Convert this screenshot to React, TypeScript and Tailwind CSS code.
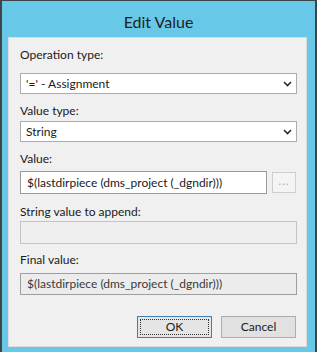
import React from "react";

const font = { fontFamily: 'Lato, "Liberation Sans", Arial, sans-serif' };

function Chevron() {
  return (
    <svg width="9" height="6" viewBox="0 0 9 6" className="shrink-0">
      <path d="M1 1 L4.5 4.5 L8 1" fill="none" stroke="#2b2b2b" strokeWidth="1.6" />
    </svg>
  );
}

function Combo({ value, className = "" }: { value: string; className?: string }) {
  return (
    <div
      className={`mr-[-1px] flex h-[21px] items-center justify-between border border-[#acacac] bg-white pl-[5px] pr-[4px] text-[12px] text-[#1a1a1a] ${className}`}
    >
      <span>{value}</span>
      <Chevron />
    </div>
  );
}

function Label({ text, className = "" }: { text: string; className?: string }) {
  return <div className={`h-[15px] text-[12px] leading-[15px] text-[#1a1a1a] ${className}`}>{text}</div>;
}

export default function App() {
  return (
    <div
      style={font}
      className="flex h-[352px] w-[317px] flex-col border-t border-l-2 border-r-2 border-[#3f4649] bg-[#67c8e8]"
    >
      <div className="flex h-[36px] items-center justify-center pt-[5px] text-[16px] text-[#1f1f1f]">
        Edit Value
      </div>
      <div className="ml-[6px] mr-[8px] mb-[5px] flex flex-1 flex-col border border-[#dcdcdc] bg-[#f0f0f0] pl-[11px] pr-[10px] pt-[9px]">
        <Label text="Operation type:" />
        <Combo value="'=' - Assignment" className="mt-[11px]" />
        <Label text="Value type:" className="mt-[9px]" />
        <Combo value="String" className="mt-[3px]" />
        <Label text="Value:" className="mt-[9px]" />
        <div className="mt-[5px] flex items-center gap-[5px]">
          <div className="flex h-[23px] w-[247px] items-center border border-[#9a9a9a] bg-white pl-[6px] text-[12px] text-[#1a1a1a]">
            $(lastdirpiece (dms_project (_dgndir)))
          </div>
          <div className="flex h-[21px] w-[24px] items-center justify-center border border-[#cfcfcf] bg-[#f4f4f4] pb-[2px] text-[11px] tracking-[1px] text-[#a8a8a8]">
            ...
          </div>
        </div>
        <Label text="String value to append:" className="mt-[10px]" />
        <div className="mt-[2px] mr-[-1px] h-[23px] border border-[#c4c4c4] bg-[#efefef]" />
        <Label text="Final value:" className="mt-[8px]" />
        <div className="mt-[6px] mr-[-1px] flex h-[22px] items-center border border-[#9e9e9e] bg-[#ececec] pl-[6px] text-[12px] text-[#3a3a3a]">
          $(lastdirpiece (dms_project (_dgndir)))
        </div>
        <div className="mt-[21px] flex justify-end gap-[9px]">
          <div className="flex h-[22px] w-[75px] items-center justify-center border border-[#3c7fb1] bg-[#e5e5e5] p-[2px]">
            <div className="flex h-full w-full items-center justify-center border border-dotted border-[#333] text-[12px] text-[#1a1a1a]">
              OK
            </div>
          </div>
          <div className="flex h-[22px] w-[75px] items-center justify-center border border-[#adadad] bg-[#e1e1e1] text-[12px] text-[#1a1a1a]">
            Cancel
          </div>
        </div>
      </div>
    </div>
  );
}
